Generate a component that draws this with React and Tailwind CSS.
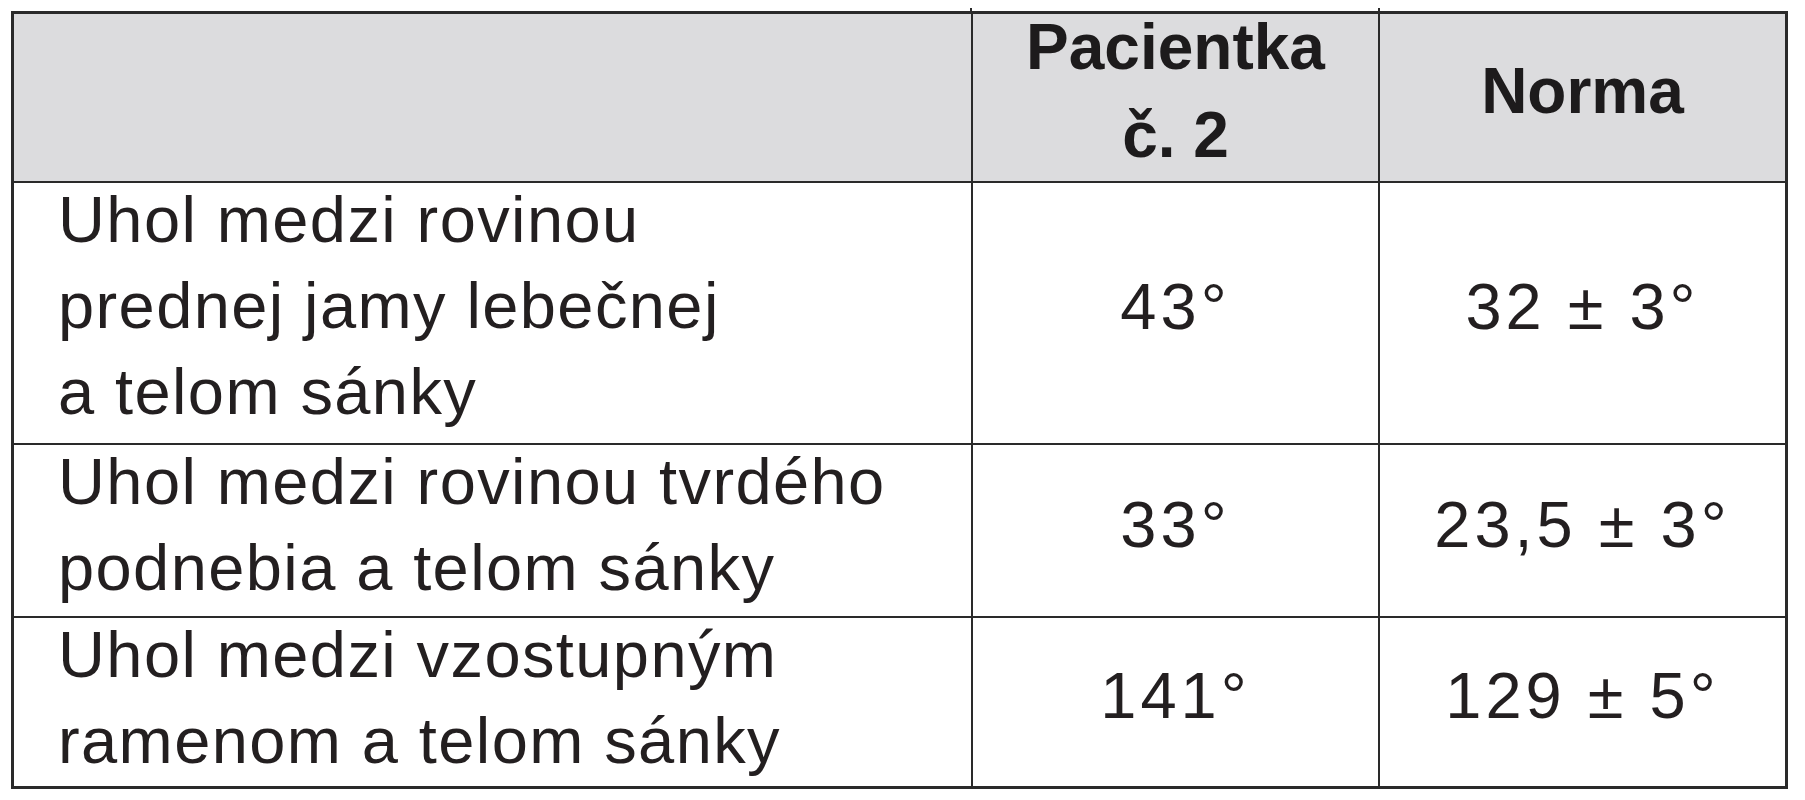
import React from "react";

const body = { fontFamily: '"Liberation Sans", Arial, sans-serif' };

function LeftCell({ lines }) {
  return (
    <div className="bg-white pl-[44px]">
      <div className="mt-[-6px] text-[65px] leading-[86px] tracking-[1.4px] text-[#231f20] whitespace-nowrap">
        {lines.map((l, i) => (
          <div key={i}>{l}</div>
        ))}
      </div>
    </div>
  );
}

function NumCell({ value }) {
  return (
    <div className="bg-white flex items-center justify-center pb-[12px]">
      <div className="text-[65px] leading-[86px] tracking-[4px] text-[#231f20] whitespace-nowrap">
        {value}
      </div>
    </div>
  );
}

export default function App() {
  return (
    <div className="w-[1805px] h-[800px] bg-white pt-[11px] pl-[11px]" style={body}>
      <div className="relative w-[1777px]">
        <div className="absolute left-[959px] top-[-3px] w-[2px] h-[4px] bg-[#2a2a2a]" />
        <div className="absolute left-[1367px] top-[-3px] w-[2px] h-[4px] bg-[#2a2a2a]" />
        <div className="grid grid-cols-[957px_405px_405px] grid-rows-[167px_260px_171px_168px] gap-[2px] border-[3px] border-[#2a2a2a] bg-[#2a2a2a]">
          {/* header */}
          <div className="bg-[#dcdcde]" />
          <div className="bg-[#dcdcde] flex flex-col items-center">
            <div className="mt-[-11px] text-center font-bold text-[64px] leading-[88px] text-[#1d1b1c] whitespace-nowrap">
              <div>Pacientka</div>
              <div>č. 2</div>
            </div>
          </div>
          <div className="bg-[#dcdcde] flex flex-col items-center">
            <div className="pt-[33px] text-center font-bold text-[64px] leading-[88px] text-[#1d1b1c] whitespace-nowrap">
              Norma
            </div>
          </div>

          {/* row 1 */}
          <LeftCell
            lines={["Uhol medzi rovinou", "prednej jamy lebečnej", "a telom sánky"]}
          />
          <NumCell value="43°" />
          <NumCell value="32 ± 3°" />

          {/* row 2 */}
          <LeftCell lines={["Uhol medzi rovinou tvrdého", "podnebia a telom sánky"]} />
          <NumCell value="33°" />
          <NumCell value="23,5 ± 3°" />

          {/* row 3 */}
          <LeftCell lines={["Uhol medzi vzostupným", "ramenom a telom sánky"]} />
          <NumCell value="141°" />
          <NumCell value="129 ± 5°" />
        </div>
      </div>
    </div>
  );
}
